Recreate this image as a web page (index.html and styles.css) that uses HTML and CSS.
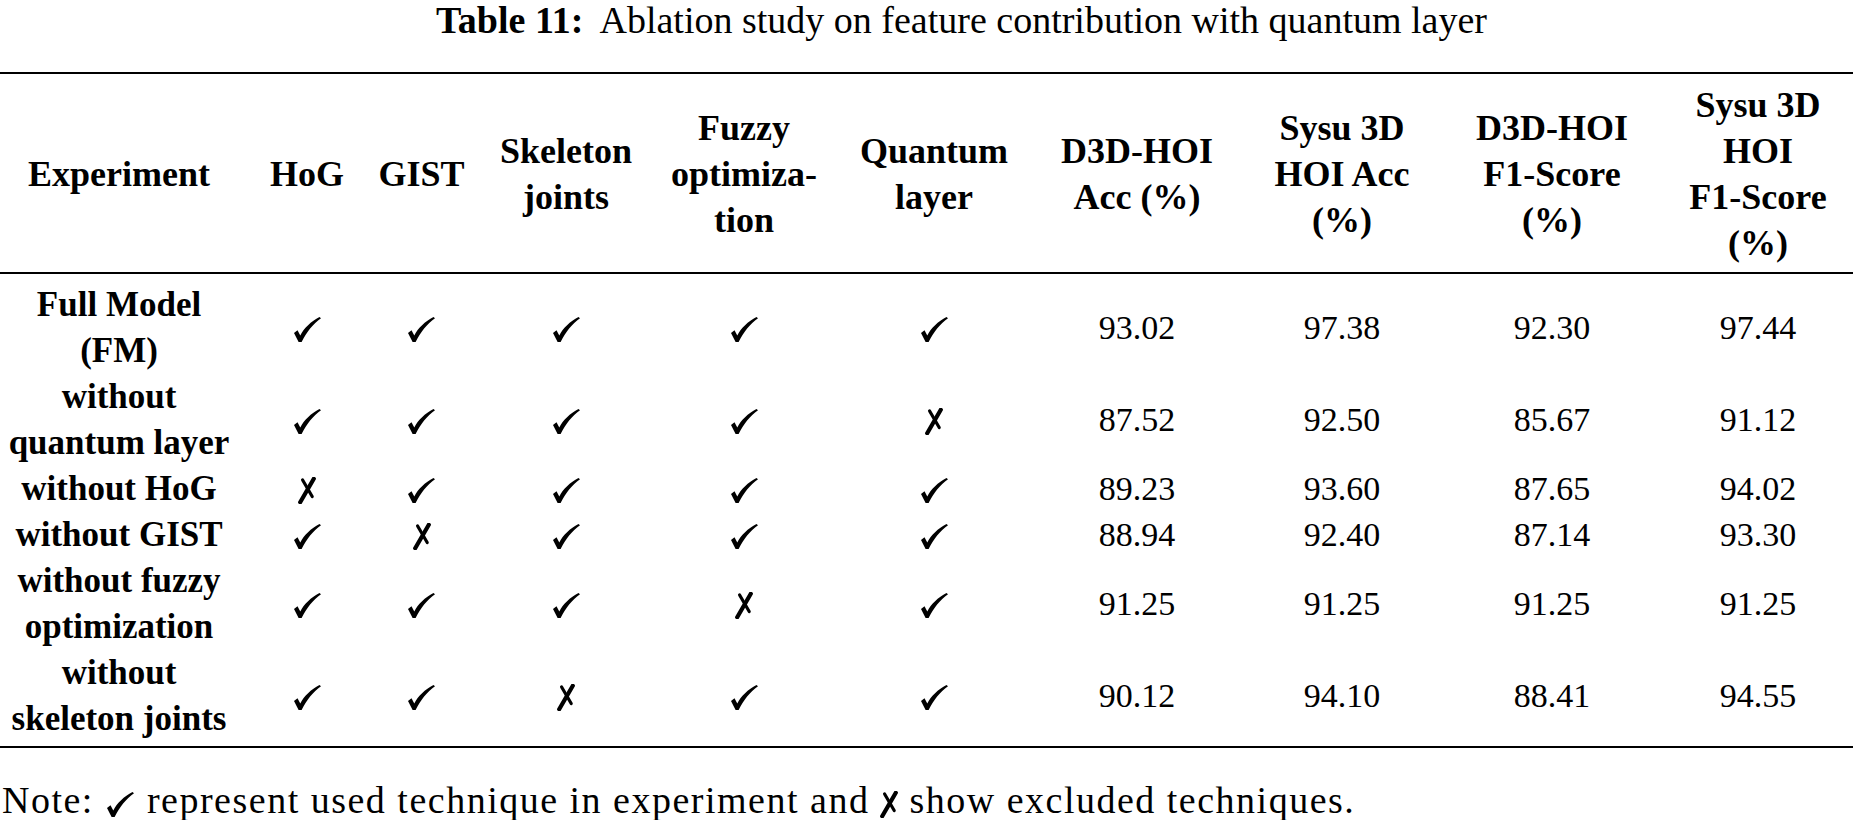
FILE: index.html
```html
<!DOCTYPE html>
<html lang="en">
<head>
<meta charset="utf-8">
<title>Table 11</title>
<link rel="stylesheet" href="styles.css">
</head>
<body>
<svg class="defs" aria-hidden="true">
  <symbol id="ck" viewBox="0 0 27 25">
    <path d="M0 16 L3.5 13.3 L6.3 18.5 C10 11 17 4.5 25.5 0 L27 1.2 C19 7 12.5 15 7.6 25 L4.6 25 Z"/>
  </symbol>
  <symbol id="xx" viewBox="0 0 18 27">
    <path d="M15.8 1.8 L2.2 25.2" stroke-width="4.2" stroke-linecap="round" fill="none"/>
    <path d="M4.6 3 L14.2 19.5" stroke-width="3.2" stroke-linecap="round" fill="none"/>
  </symbol>
</svg>

<div class="caption"><b>Table 11:</b><span class="cap-text">Ablation study on feature contribution with quantum layer</span></div>

<table class="ablation">
  <colgroup>
    <col class="c1"><col class="c2"><col class="c3"><col class="c4"><col class="c5">
    <col class="c6"><col class="c7"><col class="c8"><col class="c9"><col class="c10">
  </colgroup>
  <thead>
    <tr>
      <th class="exp">Experiment</th>
      <th>HoG</th>
      <th>GIST</th>
      <th>Skeleton<br>joints</th>
      <th>Fuzzy<br>optimiza-<br>tion</th>
      <th>Quantum<br>layer</th>
      <th>D3D-HOI<br>Acc (%)</th>
      <th>Sysu 3D<br>HOI Acc<br>(%)</th>
      <th>D3D-HOI<br>F1-Score<br>(%)</th>
      <th>Sysu 3D<br>HOI<br>F1-Score<br>(%)</th>
    </tr>
  </thead>
  <tbody>
    <tr>
      <th class="exp">Full Model<br>(FM)</th>
      <td><svg class="ck"><use href="#ck"/></svg></td>
      <td><svg class="ck"><use href="#ck"/></svg></td>
      <td><svg class="ck"><use href="#ck"/></svg></td>
      <td><svg class="ck"><use href="#ck"/></svg></td>
      <td><svg class="ck"><use href="#ck"/></svg></td>
      <td class="num">93.02</td><td class="num">97.38</td><td class="num">92.30</td><td class="num">97.44</td>
    </tr>
    <tr>
      <th class="exp">without<br>quantum layer</th>
      <td><svg class="ck"><use href="#ck"/></svg></td>
      <td><svg class="ck"><use href="#ck"/></svg></td>
      <td><svg class="ck"><use href="#ck"/></svg></td>
      <td><svg class="ck"><use href="#ck"/></svg></td>
      <td><svg class="xx"><use href="#xx"/></svg></td>
      <td class="num">87.52</td><td class="num">92.50</td><td class="num">85.67</td><td class="num">91.12</td>
    </tr>
    <tr>
      <th class="exp">without HoG</th>
      <td><svg class="xx"><use href="#xx"/></svg></td>
      <td><svg class="ck"><use href="#ck"/></svg></td>
      <td><svg class="ck"><use href="#ck"/></svg></td>
      <td><svg class="ck"><use href="#ck"/></svg></td>
      <td><svg class="ck"><use href="#ck"/></svg></td>
      <td class="num">89.23</td><td class="num">93.60</td><td class="num">87.65</td><td class="num">94.02</td>
    </tr>
    <tr>
      <th class="exp">without GIST</th>
      <td><svg class="ck"><use href="#ck"/></svg></td>
      <td><svg class="xx"><use href="#xx"/></svg></td>
      <td><svg class="ck"><use href="#ck"/></svg></td>
      <td><svg class="ck"><use href="#ck"/></svg></td>
      <td><svg class="ck"><use href="#ck"/></svg></td>
      <td class="num">88.94</td><td class="num">92.40</td><td class="num">87.14</td><td class="num">93.30</td>
    </tr>
    <tr>
      <th class="exp">without fuzzy<br>optimization</th>
      <td><svg class="ck"><use href="#ck"/></svg></td>
      <td><svg class="ck"><use href="#ck"/></svg></td>
      <td><svg class="ck"><use href="#ck"/></svg></td>
      <td><svg class="xx"><use href="#xx"/></svg></td>
      <td><svg class="ck"><use href="#ck"/></svg></td>
      <td class="num">91.25</td><td class="num">91.25</td><td class="num">91.25</td><td class="num">91.25</td>
    </tr>
    <tr class="last">
      <th class="exp">without<br>skeleton joints</th>
      <td><svg class="ck"><use href="#ck"/></svg></td>
      <td><svg class="ck"><use href="#ck"/></svg></td>
      <td><svg class="xx"><use href="#xx"/></svg></td>
      <td><svg class="ck"><use href="#ck"/></svg></td>
      <td><svg class="ck"><use href="#ck"/></svg></td>
      <td class="num">90.12</td><td class="num">94.10</td><td class="num">88.41</td><td class="num">94.55</td>
    </tr>
  </tbody>
</table>

<p class="note">Note: <svg class="ck"><use href="#ck"/></svg> represent used technique in experiment and <svg class="xx"><use href="#xx"/></svg> show excluded techniques.</p>
</body>
</html>
```

FILE: styles.css
```css
html, body {
  margin: 0;
  padding: 0;
  background: #fff;
  color: #000;
}

body {
  font-family: "Liberation Serif", "Times New Roman", serif;
  width: 1853px;
}

.defs {
  position: absolute;
  width: 0;
  height: 0;
  overflow: hidden;
}

.caption {
  font-size: 38px;
  line-height: 40px;
  text-align: center;
  padding-left: 70px;
  margin: 0 0 32px 0;
  white-space: nowrap;
}

.caption b {
  font-weight: 700;
}

.cap-text {
  margin-left: 16px;
}

.ablation {
  width: 1853px;
  table-layout: fixed;
  border-collapse: collapse;
  border-top: 2px solid #000;
  border-bottom: 2px solid #000;
}

.c1 { width: 252px; }
.c2 { width: 110px; }
.c3 { width: 119px; }
.c4 { width: 170px; }
.c5 { width: 186px; }
.c6 { width: 194px; }
.c7 { width: 212px; }
.c8 { width: 198px; }
.c9 { width: 222px; }
.c10 { width: 190px; }

.ablation th,
.ablation td {
  padding: 0;
  text-align: center;
  vertical-align: middle;
  white-space: nowrap;
  line-height: 46px;
}

.ablation th {
  font-size: 35px;
  font-weight: 700;
}

.ablation th.exp {
  padding-right: 14px;
}

.ablation thead th {
  padding-top: 8px;
  padding-bottom: 6px;
  border-bottom: 2px solid #000;
  font-size: 36px;
}

.ablation tbody tr:first-child th,
.ablation tbody tr:first-child td {
  padding-top: 8px;
}

.ablation tbody tr.last th,
.ablation tbody tr.last td {
  padding-bottom: 4px;
}

.ablation td.num {
  font-size: 34px;
}

.ck {
  display: inline-block;
  width: 27px;
  height: 25px;
  vertical-align: -4px;
  fill: #000;
}

.xx {
  display: inline-block;
  width: 18px;
  height: 27px;
  vertical-align: -5px;
  stroke: #000;
  fill: none;
}

.ablation td .ck,
.ablation td .xx {
  vertical-align: middle;
}

.note {
  margin: 29px 0 0 2px;
  font-size: 38px;
  letter-spacing: 1.5px;
  line-height: 46px;
  white-space: nowrap;
}

.note .ck {
  margin: 0 2px;
}
```
